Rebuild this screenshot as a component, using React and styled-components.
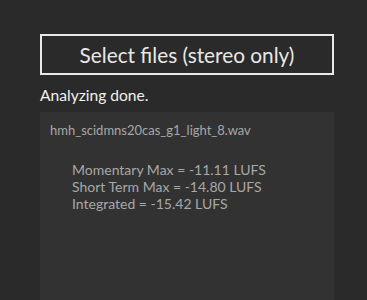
import styled, { createGlobalStyle } from 'styled-components';

const Global = createGlobalStyle`
  html, body {
    margin: 0;
    background: #2a2a2a;
    font-family: Lato, "Open Sans", sans-serif;
    height: 100%;
    overflow: hidden;
  }
`;

const Page = styled.div`
  display: flex;
  flex-direction: column;
  padding: 34px 33px 0 40px;
`;

const SelectButton = styled.button`
  width: 294px;
  height: 41px;
  border: 2px solid #e8e8e8;
  background: transparent;
  color: #e8e8e8;
  font-family: Lato, sans-serif;
  font-size: 20.8px;
  font-weight: 400;
  padding: 0;
  cursor: pointer;
`;

const Status = styled.div`
  color: #f0f0f0;
  font-size: 15.6px;
  margin-top: 10px;
  line-height: 20px;
`;

const Results = styled.div`
  margin-top: 7px;
  width: 294px;
  height: 200px;
  background: #323232;
  padding: 10px 10px;
  box-sizing: border-box;
  color: #a8a8a8;
`;

const FileName = styled.div`
  font-size: 13px;
  line-height: 17px;
`;

const Stats = styled.div`
  margin-top: 22px;
  padding-left: 22px;
  font-size: 14px;
  line-height: 17px;
`;

export default function App() {
  return (
    <>
      <Global />
      <Page>
        <SelectButton>Select files (stereo only)</SelectButton>
        <Status>Analyzing done.</Status>
        <Results>
          <FileName>hmh_scidmns20cas_g1_light_8.wav</FileName>
          <Stats>
            <div>Momentary Max = -11.11 LUFS</div>
            <div>Short Term Max = -14.80 LUFS</div>
            <div>Integrated = -15.42 LUFS</div>
          </Stats>
        </Results>
      </Page>
    </>
  );
}
